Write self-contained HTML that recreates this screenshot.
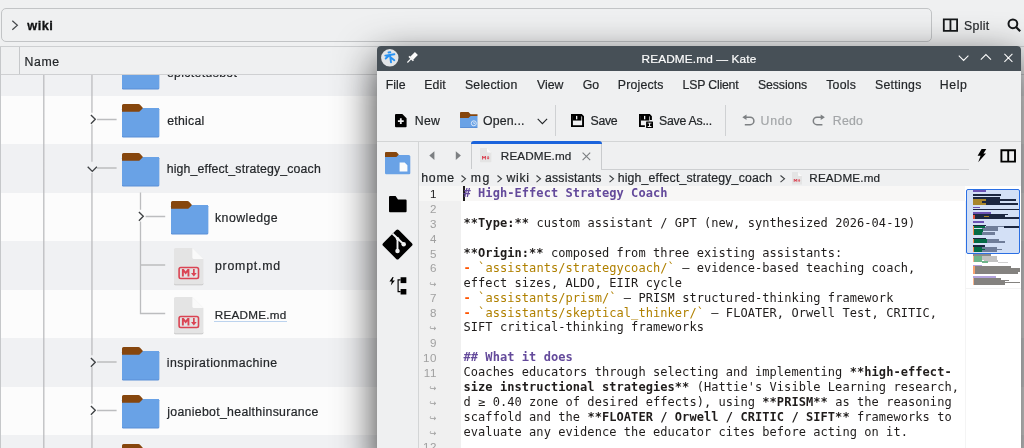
<!DOCTYPE html>
<html lang="en"><head><meta charset="utf-8"><title>Dolphin / Kate</title>
<style>
*{box-sizing:border-box;margin:0;padding:0}
html,body{width:1024px;height:448px;overflow:hidden;background:#eff0f1}
body{position:relative;font:12.3px "Liberation Sans", sans-serif;color:#232629}
.a{position:absolute}
.t{position:absolute;white-space:pre;line-height:16px;height:16px;-webkit-text-stroke:.2px}
svg{position:absolute;overflow:visible}
.row{position:absolute;left:1px;width:1023px}
.ln{position:absolute;background:#c3c4c6}
#kate{z-index:2;position:absolute;left:377px;top:45.5px;width:644px;height:420px;background:#eff0f1;border-radius:4px 4px 0 0;box-shadow:0 14px 40px rgba(0,0,0,.8)}
#kw{position:absolute;left:0;top:0;width:1024px;height:448px;will-change:transform}
#tx{will-change:transform}
.c{position:absolute;left:463.5px;white-space:pre;font:12px "DejaVu Sans Mono", "Liberation Mono", monospace;line-height:15px;height:15px;color:#1f1c1b;letter-spacing:.062px}
.c b{font-weight:bold}
.h{color:#644a9b;font-weight:bold}
.o{color:#ff5500;font-weight:bold}
.g{color:#b08000}
.n{position:absolute;left:419px;width:18.1px;letter-spacing:.6px;text-align:right;font:11.6px "Liberation Sans", sans-serif;line-height:16px;height:16px;color:#a0a0a0}
.m{position:absolute;height:1.5px}
.w{position:absolute;left:428.6px;width:9px;text-align:center;font:8.4px "DejaVu Sans",sans-serif;line-height:12px;height:12px;color:#9c9c9c}
</style></head>
<body>
<div class="a" style="left:1px;top:8px;width:931px;height:34px;border:1px solid #c2c4c6;border-radius:5px"></div>
<svg style="left:11px;top:20px" width="8" height="11" viewBox="0 0 8 11"><path d="M1.3 .7 L6.4 5.2 L1.3 9.7" fill="none" stroke="#46494c" stroke-width="1.2"/></svg>
<svg style="left:942px;top:18px" width="17" height="14" viewBox="0 0 17 14"><path d="M1.8 1.4H15.1V12.8H1.8Z M8.45 1.4V12.8" fill="none" stroke="#16181a" stroke-width="1.8"/></svg>
<svg style="left:1006px;top:18px" width="16" height="15" viewBox="0 0 16 15"><circle cx="6.9" cy="5.8" r="4.4" fill="none" stroke="#16181a" stroke-width="2"/><path d="M10 9 L14.2 13.2" stroke="#16181a" stroke-width="2.2"/></svg>
<div class="a" style="left:0;top:46px;width:1024px;height:1px;background:#cdcfd1"></div>
<div class="row" style="top:47.1px;height:48.5px;background:#f0f1f3"></div>
<div class="row" style="top:95.6px;height:48.5px;background:#fcfcfc"></div>
<div class="row" style="top:144.1px;height:48.5px;background:#f0f1f3"></div>
<div class="row" style="top:192.6px;height:48.5px;background:#fcfcfc"></div>
<div class="row" style="top:241.1px;height:48.5px;background:#f0f1f3"></div>
<div class="row" style="top:289.6px;height:48.5px;background:#fcfcfc"></div>
<div class="row" style="top:338.1px;height:48.5px;background:#f0f1f3"></div>
<div class="row" style="top:386.6px;height:48.5px;background:#fcfcfc"></div>
<div class="row" style="top:435.1px;height:48.5px;background:#f0f1f3"></div>
<div class="a" style="left:0;top:47px;width:1px;height:401px;background:#c6c8ca"></div>
<svg style="left:89.7px;top:114.20px" width="7" height="11" viewBox="0 0 7 11"><path d="M.9 .9 L5.3 5.3 L.9 9.7" fill="none" stroke="#3f4245" stroke-width="1.35"/></svg>
<svg style="left:89.7px;top:356.70px" width="7" height="11" viewBox="0 0 7 11"><path d="M.9 .9 L5.3 5.3 L.9 9.7" fill="none" stroke="#3f4245" stroke-width="1.35"/></svg>
<svg style="left:89.7px;top:405.20px" width="7" height="11" viewBox="0 0 7 11"><path d="M.9 .9 L5.3 5.3 L.9 9.7" fill="none" stroke="#3f4245" stroke-width="1.35"/></svg>
<svg style="left:86.8px;top:165.70px" width="11" height="7" viewBox="0 0 11 7"><path d="M.7 .8 L5.3 5.4 L9.9 .8" fill="none" stroke="#3f4245" stroke-width="1.35"/></svg>
<svg style="left:138.3px;top:211.20px" width="7" height="11" viewBox="0 0 7 11"><path d="M.9 .9 L5.3 5.3 L.9 9.7" fill="none" stroke="#3f4245" stroke-width="1.35"/></svg>
<svg style="left:0;top:0" width="400" height="448" viewBox="0 0 400 448"><path d="M43.80 75.0V448.0M91.95 75.0V112.8M91.95 124.4V161.8M91.95 173.0V355.3M91.95 366.9V403.8M91.95 415.4V448.0M97.0 119.50H116.6M97.0 362.00H116.6M97.0 410.50H116.6M97.0 168.00H116.6M140.50 192.6V209.8M140.50 221.4V314.2M145.6 216.50H165.2M140.5 265.00H165.2M140.5 313.50H165.2" fill="none" stroke="#bcbdbf" stroke-width="1.3"/></svg>
<svg style="left:122.00px;top:55.70px;z-index:0" width="37.2" height="33.6" viewBox="0 0 38 33.3" preserveAspectRatio="none"><path d="M0 5.2 Q0 3.9 1.3 3.9 H36.7 Q38 3.9 38 5.2 V32 Q38 33.3 36.7 33.3 H1.3 Q0 33.3 0 32 Z" fill="#5a8fd6"/><path d="M0 5.2 Q0 3.9 1.3 3.9 H36.7 Q38 3.9 38 5.2 V31 Q38 32.3 36.7 32.3 H1.3 Q0 32.3 0 31 Z" fill="#69a2e6"/><path d="M0 1.6 Q0 0 1.6 0 H16.8 Q17.6 0 18.2 .6 L21 3.4 Q21.5 3.9 21 4.4 L18.2 7.2 Q17.6 7.8 16.8 7.8 H0 Z" fill="#86460d"/></svg>
<svg style="left:122.00px;top:104.20px;z-index:1" width="37.2" height="33.6" viewBox="0 0 38 33.3" preserveAspectRatio="none"><path d="M0 5.2 Q0 3.9 1.3 3.9 H36.7 Q38 3.9 38 5.2 V32 Q38 33.3 36.7 33.3 H1.3 Q0 33.3 0 32 Z" fill="#5a8fd6"/><path d="M0 5.2 Q0 3.9 1.3 3.9 H36.7 Q38 3.9 38 5.2 V31 Q38 32.3 36.7 32.3 H1.3 Q0 32.3 0 31 Z" fill="#69a2e6"/><path d="M0 1.6 Q0 0 1.6 0 H16.8 Q17.6 0 18.2 .6 L21 3.4 Q21.5 3.9 21 4.4 L18.2 7.2 Q17.6 7.8 16.8 7.8 H0 Z" fill="#86460d"/></svg>
<svg style="left:122.00px;top:152.70px;z-index:1" width="37.2" height="33.6" viewBox="0 0 38 33.3" preserveAspectRatio="none"><path d="M0 5.2 Q0 3.9 1.3 3.9 H36.7 Q38 3.9 38 5.2 V32 Q38 33.3 36.7 33.3 H1.3 Q0 33.3 0 32 Z" fill="#5a8fd6"/><path d="M0 5.2 Q0 3.9 1.3 3.9 H36.7 Q38 3.9 38 5.2 V31 Q38 32.3 36.7 32.3 H1.3 Q0 32.3 0 31 Z" fill="#69a2e6"/><path d="M0 1.6 Q0 0 1.6 0 H16.8 Q17.6 0 18.2 .6 L21 3.4 Q21.5 3.9 21 4.4 L18.2 7.2 Q17.6 7.8 16.8 7.8 H0 Z" fill="#86460d"/></svg>
<svg style="left:170.70px;top:201.20px;z-index:1" width="37.2" height="33.6" viewBox="0 0 38 33.3" preserveAspectRatio="none"><path d="M0 5.2 Q0 3.9 1.3 3.9 H36.7 Q38 3.9 38 5.2 V32 Q38 33.3 36.7 33.3 H1.3 Q0 33.3 0 32 Z" fill="#5a8fd6"/><path d="M0 5.2 Q0 3.9 1.3 3.9 H36.7 Q38 3.9 38 5.2 V31 Q38 32.3 36.7 32.3 H1.3 Q0 32.3 0 31 Z" fill="#69a2e6"/><path d="M0 1.6 Q0 0 1.6 0 H16.8 Q17.6 0 18.2 .6 L21 3.4 Q21.5 3.9 21 4.4 L18.2 7.2 Q17.6 7.8 16.8 7.8 H0 Z" fill="#86460d"/></svg>
<svg style="left:122.00px;top:346.70px;z-index:1" width="37.2" height="33.6" viewBox="0 0 38 33.3" preserveAspectRatio="none"><path d="M0 5.2 Q0 3.9 1.3 3.9 H36.7 Q38 3.9 38 5.2 V32 Q38 33.3 36.7 33.3 H1.3 Q0 33.3 0 32 Z" fill="#5a8fd6"/><path d="M0 5.2 Q0 3.9 1.3 3.9 H36.7 Q38 3.9 38 5.2 V31 Q38 32.3 36.7 32.3 H1.3 Q0 32.3 0 31 Z" fill="#69a2e6"/><path d="M0 1.6 Q0 0 1.6 0 H16.8 Q17.6 0 18.2 .6 L21 3.4 Q21.5 3.9 21 4.4 L18.2 7.2 Q17.6 7.8 16.8 7.8 H0 Z" fill="#86460d"/></svg>
<svg style="left:122.00px;top:395.20px;z-index:1" width="37.2" height="33.6" viewBox="0 0 38 33.3" preserveAspectRatio="none"><path d="M0 5.2 Q0 3.9 1.3 3.9 H36.7 Q38 3.9 38 5.2 V32 Q38 33.3 36.7 33.3 H1.3 Q0 33.3 0 32 Z" fill="#5a8fd6"/><path d="M0 5.2 Q0 3.9 1.3 3.9 H36.7 Q38 3.9 38 5.2 V31 Q38 32.3 36.7 32.3 H1.3 Q0 32.3 0 31 Z" fill="#69a2e6"/><path d="M0 1.6 Q0 0 1.6 0 H16.8 Q17.6 0 18.2 .6 L21 3.4 Q21.5 3.9 21 4.4 L18.2 7.2 Q17.6 7.8 16.8 7.8 H0 Z" fill="#86460d"/></svg>
<svg style="left:122.00px;top:443.70px;z-index:1" width="37.2" height="33.6" viewBox="0 0 38 33.3" preserveAspectRatio="none"><path d="M0 5.2 Q0 3.9 1.3 3.9 H36.7 Q38 3.9 38 5.2 V32 Q38 33.3 36.7 33.3 H1.3 Q0 33.3 0 32 Z" fill="#5a8fd6"/><path d="M0 5.2 Q0 3.9 1.3 3.9 H36.7 Q38 3.9 38 5.2 V31 Q38 32.3 36.7 32.3 H1.3 Q0 32.3 0 31 Z" fill="#69a2e6"/><path d="M0 1.6 Q0 0 1.6 0 H16.8 Q17.6 0 18.2 .6 L21 3.4 Q21.5 3.9 21 4.4 L18.2 7.2 Q17.6 7.8 16.8 7.8 H0 Z" fill="#86460d"/></svg>
<svg style="left:174.30px;top:248.20px" width="30" height="38" viewBox="0 0 30 38"><path d="M1.6 0 H18.4 L29.4 11 V35.7 Q29.4 37.3 27.8 37.3 H1.6 Q0 37.3 0 35.7 V1.6 Q0 0 1.6 0Z" fill="#e4e4e4"/><path d="M0 34.7 V35.7 Q0 37.3 1.6 37.3 H27.8 Q29.4 37.3 29.4 35.7 V34.7 Q29.4 36.3 27.8 36.3 H1.6 Q0 36.3 0 34.7Z" fill="#cbcbcb"/><path d="M18.4 0 L29.4 11 H20 Q18.4 11 18.4 9.4 Z" fill="#fafafa"/><rect x="5.1" y="19.5" width="19.4" height="11" rx="1.7" fill="none" stroke="#da4453" stroke-width="1.6"/><path d="M7.9 28.6 V21.1 H9.8 L11.65 23.6 L13.5 21.1 H15.4 V28.6 H13.5 V24.2 L11.65 26.6 L9.8 24.2 V28.6Z M19 21.1 H20.7 V25 H22.7 L19.85 28.6 L17 25 H19Z" fill="#da4453"/></svg>
<svg style="left:174.30px;top:296.70px" width="30" height="38" viewBox="0 0 30 38"><path d="M1.6 0 H18.4 L29.4 11 V35.7 Q29.4 37.3 27.8 37.3 H1.6 Q0 37.3 0 35.7 V1.6 Q0 0 1.6 0Z" fill="#e4e4e4"/><path d="M0 34.7 V35.7 Q0 37.3 1.6 37.3 H27.8 Q29.4 37.3 29.4 35.7 V34.7 Q29.4 36.3 27.8 36.3 H1.6 Q0 36.3 0 34.7Z" fill="#cbcbcb"/><path d="M18.4 0 L29.4 11 H20 Q18.4 11 18.4 9.4 Z" fill="#fafafa"/><rect x="5.1" y="19.5" width="19.4" height="11" rx="1.7" fill="none" stroke="#da4453" stroke-width="1.6"/><path d="M7.9 28.6 V21.1 H9.8 L11.65 23.6 L13.5 21.1 H15.4 V28.6 H13.5 V24.2 L11.65 26.6 L9.8 24.2 V28.6Z M19 21.1 H20.7 V25 H22.7 L19.85 28.6 L17 25 H19Z" fill="#da4453"/></svg>
<div class="a" style="left:214px;top:320.8px;width:73px;height:1px;background:#bcd3ee;z-index:1"></div>
<div class="a" style="left:1px;top:47px;width:1023px;height:28px;background:#eff0f1;border-bottom:1px solid #cfd0d2;z-index:1"></div>
<div class="a" style="left:19px;top:47px;width:1px;height:27px;background:#c6c8ca;z-index:1"></div>
<div id="kate"></div><div id="kw" style="z-index:3">
<div class="a" style="left:377px;top:45.5px;width:644px;height:25px;background:#475057;border-radius:4px 4px 0 0"></div>
<svg style="left:381px;top:48.5px" width="18" height="18" viewBox="381 48.5 18 18"><circle cx="389.8" cy="57.3" r="8.7" fill="#e3e5e7"/><path d="M385.3 55.1 L394.4 53.7 M389.7 54.5 L385.7 58 M390 54.4 L391 61.8 M390.5 56.7 L394.3 59.7 M388.5 52 L390.3 51.8" fill="none" stroke="#2892f3" stroke-width="1.9" stroke-linecap="round"/></svg>
<svg style="left:406px;top:51px" width="13" height="13" viewBox="406 51 13 13"><path d="M416.4 53.5 L411.7 58.2" stroke="#fcfcfc" stroke-width="4.2"/><path d="M409 56.4 L413.4 60.8" stroke="#fcfcfc" stroke-width="1.5"/><path d="M411.2 58.7 L407.4 62.5" stroke="#fcfcfc" stroke-width="1.1"/></svg>
<svg style="left:958px;top:53px" width="56" height="10" viewBox="0 0 56 10"><path d="M.8 2.6 L5.6 7.4 L10.4 2.6 M22.8 6.6 L27.9 1.6 L33 6.6 M46.4 .9 L54.4 8.9 M54.4 .9 L46.4 8.9" fill="none" stroke="#fcfcfc" stroke-width="1.05"/></svg>
<div class="a" style="left:377px;top:141px;width:644px;height:1px;background:#d3d5d6"></div>
<div class="a" style="left:555px;top:104.5px;width:1px;height:31px;background:#cfd1d3"></div>
<div class="a" style="left:725px;top:104.5px;width:1px;height:31px;background:#cfd1d3"></div>
<svg style="left:395.2px;top:113.5px" width="12" height="14" viewBox="0 0 12 14"><path d="M1 0 H7.3 L11.6 4.3 V12.2 Q11.6 13.2 10.6 13.2 H1 Q0 13.2 0 12.2 V1 Q0 0 1 0Z" fill="#000"/><path d="M2.9 6.2 H4.9 V4.2 H6.7 V6.2 H8.7 V8 H6.7 V10 H4.9 V8 H2.9Z" fill="#eff0f1"/></svg>
<svg style="left:460.4px;top:111.9px" width="18" height="16" viewBox="0 0 18 16"><path d="M0 4 H17.5 V15.1 Q17.5 16 16.6 16 H.9 Q0 16 0 15.1Z" fill="#69a2e6"/><path d="M0 15 V15.1 Q0 16 .9 16 H16.6 Q17.5 16 17.5 15.1 V15Z" fill="#5a8fd6"/><path d="M0 .9 Q0 0 .9 0 H8.5 L10.6 2.2 H17.5 V4.1 H10.6 L8.5 6 H0Z" fill="#86460d"/><circle cx="13.8" cy="11.3" r="2.5" fill="none" stroke="#e4edf9" stroke-width=".9"/><path d="M13.8 9.9 V11.4 H15" fill="none" stroke="#e4edf9" stroke-width=".8"/></svg>
<svg style="left:536.5px;top:117.5px" width="11" height="7" viewBox="0 0 11 7"><path d="M.7 .9 L5.4 5.6 L10.1 .9" fill="none" stroke="#232629" stroke-width="1.1"/></svg>
<svg style="left:570.9px;top:113.5px" width="14" height="14" viewBox="0 0 14 14"><path d="M.95 .95 H10.4 L12.05 2.6 V12.15 H.95Z" fill="#f1f2f3" stroke="#000" stroke-width="1.9"/><rect x="1.9" y=".95" width="8.4" height="5.6" fill="#000"/><rect x="5" y="1.9" width="1.3" height="3.4" fill="#eff0f1"/></svg>
<svg style="left:638.9px;top:113.5px" width="15" height="15" viewBox="0 0 15 15"><path d="M11.95 5.9 V2.6 L10.4 .95 H.95 V12.15 H5.9" fill="none" stroke="#000" stroke-width="1.9"/><rect x="1.9" y=".95" width="8.4" height="5.6" fill="#000"/><rect x="5" y="1.9" width="1.3" height="3.4" fill="#eff0f1"/><rect x="7.1" y="7.5" width="6.9" height="6.6" rx=".6" fill="#000"/><path d="M8.7 8.7 H12.4 V9.6 H11.1 V12.1 H12.4 V13 H8.7 V12.1 H10 V9.6 H8.7Z" fill="#eff0f1"/></svg>
<svg style="left:741.5px;top:114px" width="13" height="12" viewBox="0 0 13 12"><path d="M4 3.25 H8.2 A3.7 3.7 0 0 1 8.2 10.65 H2.8" fill="none" stroke="#7d8083" stroke-width="1.5"/><path d="M4.5 .4 L.3 3.3 L4.5 6.1Z" fill="#7d8083"/></svg>
<svg style="left:813px;top:114px" width="13" height="12" viewBox="0 0 13 12"><path d="M8.2 3.25 H4 A3.7 3.7 0 0 0 4 10.65 H9.4" fill="none" stroke="#7d8083" stroke-width="1.5"/><path d="M7.7 .4 L11.9 3.3 L7.7 6.1Z" fill="#7d8083"/></svg>
<div class="a" style="left:418px;top:142px;width:1px;height:306px;background:#d3d5d6"></div>
<svg style="left:384.5px;top:151.6px" width="26" height="23" viewBox="0 0 26 23"><path d="M0 3 H23.7 Q25.3 3 25.3 4.6 V21 Q25.3 22.2 24.1 22.2 H1.2 Q0 22.2 0 21Z" fill="#69a2e6"/><path d="M0 1 Q0 0 1 0 H11.4 L13.8 2.4 L11.4 4.9 H0Z" fill="#86460d"/><path d="M14.6 10.4 H19.6 L22.4 13.2 V19.6 H14.6Z" fill="#fcfcfc"/></svg>
<svg style="left:388.8px;top:196.3px" width="18" height="17" viewBox="0 0 18 17"><path d="M0 1 Q0 0 1 0 H6.6 L9 3.6 H16.6 Q17.6 3.6 17.6 4.6 V15.2 Q17.6 16.2 16.6 16.2 H1 Q0 16.2 0 15.2Z" fill="#000"/></svg>
<svg style="left:381.7px;top:229.25px" width="31" height="31" viewBox="0 0 31 31"><rect x="4.4" y="4.4" width="22.2" height="22.2" rx="1.8" transform="rotate(45 15.5 15.5)" fill="#000"/><path d="M10.6 4.8 L21.4 15 M15.5 9.4 V21.5" stroke="#eff0f1" stroke-width="1.9" fill="none"/><circle cx="21.7" cy="15.2" r="2.25" fill="#eff0f1"/><circle cx="15.5" cy="9.6" r="1.7" fill="#eff0f1"/><circle cx="15.5" cy="21.9" r="2.25" fill="#eff0f1"/></svg>
<svg style="left:388.5px;top:277px" width="18" height="18" viewBox="0 0 18 18"><path d="M3.6 0 L.4 4.5 H2.8 L1.8 8.4 L5.9 3.4 H3.4 L4.6 0Z" fill="#000"/><rect x="11.6" y=".25" width="5.75" height="5.85" fill="#000"/><rect x="11.6" y="12" width="5.75" height="5.5" fill="#000"/><path d="M11.6 2.9 H9.1 V14.6 H11.6" fill="none" stroke="#000" stroke-width="1.15"/></svg>
<svg style="left:429px;top:151px" width="32" height="10" viewBox="0 0 32 10"><path d="M5.4 .3 V8.9 L.3 4.6Z M26.8 .3 V8.9 L31.9 4.6Z" fill="#7c7f82"/></svg>
<div class="a" style="left:601px;top:168.5px;width:368px;height:1px;background:#cdcfd1"></div>
<div class="a" style="left:471px;top:141px;width:131px;height:28px;border:1px solid #c9cbcd;border-bottom:none;border-radius:3px 3px 0 0;background:#eff0f1"></div>
<div class="a" style="left:471px;top:141px;width:131px;height:3.4px;border-radius:3px 3px 0 0;background:#1a63dc"></div>
<svg style="left:480.0px;top:148.0px" width="11.4" height="14.2" viewBox="0 0 11.4 14.2"><path d="M.6 0 H7 L11.4 4.4 V13.6 Q11.4 14.2 10.8 14.2 H.6 Q0 14.2 0 13.6 V.6 Q0 0 .6 0Z" fill="#e4e4e4"/><path d="M7 0 L11.4 4.4 H7.6 Q7 4.4 7 3.8Z" fill="#fafafa"/><path d="M2 11.4 V8 H3 L4 9.2 L5 8 H6 V11.4 H5.1 V9.5 L4 10.7 L2.9 9.5 V11.4Z M7.6 8 H8.6 V9.7 H9.6 L8.1 11.5 L6.6 9.7 H7.6Z" fill="#da4453"/></svg>
<svg style="left:792.0px;top:172.1px" width="10.0" height="12.5" viewBox="0 0 11.4 14.2"><path d="M.6 0 H7 L11.4 4.4 V13.6 Q11.4 14.2 10.8 14.2 H.6 Q0 14.2 0 13.6 V.6 Q0 0 .6 0Z" fill="#e4e4e4"/><path d="M7 0 L11.4 4.4 H7.6 Q7 4.4 7 3.8Z" fill="#fafafa"/><path d="M2 11.4 V8 H3 L4 9.2 L5 8 H6 V11.4 H5.1 V9.5 L4 10.7 L2.9 9.5 V11.4Z M7.6 8 H8.6 V9.7 H9.6 L8.1 11.5 L6.6 9.7 H7.6Z" fill="#da4453"/></svg>
<svg style="left:582px;top:151.5px" width="9" height="9" viewBox="0 0 9 9"><path d="M.6 .6 L8.2 8.2 M8.2 .6 L.6 8.2" stroke="#7a7d80" stroke-width="1.1"/></svg>
<svg style="left:977px;top:148.5px" width="10" height="14" viewBox="0 0 10 14"><path d="M4.6 0 H9.3 L6.4 4.6 H9 L1.2 13.2 L3.6 6.8 H.6Z" fill="#000"/></svg>
<svg style="left:1000px;top:148.5px" width="17" height="14" viewBox="0 0 17 14"><path d="M1.4 1.3 H15 V12.6 H1.4Z M8.2 1.3 V12.6" fill="none" stroke="#000" stroke-width="1.9"/></svg>
<svg style="left:461.1px;top:174.8px" width="6" height="8" viewBox="0 0 6 8"><path d="M.5 .5 L4.5 3.8 L.5 7.1" fill="none" stroke="#3c3f42" stroke-width="1.1"/></svg>
<svg style="left:496.6px;top:174.8px" width="6" height="8" viewBox="0 0 6 8"><path d="M.5 .5 L4.5 3.8 L.5 7.1" fill="none" stroke="#3c3f42" stroke-width="1.1"/></svg>
<svg style="left:535.9px;top:174.8px" width="6" height="8" viewBox="0 0 6 8"><path d="M.5 .5 L4.5 3.8 L.5 7.1" fill="none" stroke="#3c3f42" stroke-width="1.1"/></svg>
<svg style="left:609.1px;top:174.8px" width="6" height="8" viewBox="0 0 6 8"><path d="M.5 .5 L4.5 3.8 L.5 7.1" fill="none" stroke="#3c3f42" stroke-width="1.1"/></svg>
<svg style="left:780.1px;top:174.8px" width="6" height="8" viewBox="0 0 6 8"><path d="M.5 .5 L4.5 3.8 L.5 7.1" fill="none" stroke="#3c3f42" stroke-width="1.1"/></svg>
<div class="a" style="left:419px;top:186px;width:547px;height:262px;background:#fff"></div>
<div class="a" style="left:966px;top:186px;width:55px;height:262px;background:#fff"></div>
<div class="a" style="left:419px;top:186px;width:42px;height:262px;background:#f0f0f0"></div>
<div class="a" style="left:965px;top:201px;width:1px;height:247px;background:#f4f4f4"></div>
<div class="a" style="left:461px;top:186px;width:504px;height:15px;background:#f8f7f6"></div>
<div class="a" style="left:419px;top:186px;width:42px;height:15px;background:#f6f6f5"></div>
<div class="a" style="left:463.3px;top:186.2px;width:2px;height:14.7px;background:#1f1c1b"></div>
<div class="c" style="top:185.50px"><span class="h"># High-Effect Strategy Coach</span></div>
<div class="n" style="top:186.00px;color:#1e1e1e">1</div>
<div class="n" style="top:201.00px">2</div>
<div class="c" style="top:215.50px"><b>**Type:**</b> custom assistant / GPT (new, synthesized 2026-04-19)</div>
<div class="n" style="top:216.00px">3</div>
<div class="n" style="top:231.00px">4</div>
<div class="c" style="top:245.50px"><b>**Origin:**</b> composed from three existing assistants:</div>
<div class="n" style="top:246.00px">5</div>
<div class="c" style="top:260.50px"><span class="o">-</span> <span class="g">`assistants/strategycoach/`</span> — evidence-based teaching coach,</div>
<div class="n" style="top:260.00px">6</div>
<div class="c" style="top:275.50px">effect sizes, ALDO, EIIR cycle</div>
<div class="w" style="top:277.60px">↪</div>
<div class="c" style="top:290.50px"><span class="o">-</span> <span class="g">`assistants/prism/`</span> — PRISM structured-thinking framework</div>
<div class="n" style="top:290.00px">7</div>
<div class="c" style="top:305.50px"><span class="o">-</span> <span class="g">`assistants/skeptical_thinker/`</span> — FLOATER, Orwell Test, CRITIC,</div>
<div class="n" style="top:305.00px">8</div>
<div class="c" style="top:319.50px">SIFT critical-thinking frameworks</div>
<div class="w" style="top:321.60px">↪</div>
<div class="n" style="top:335.00px">9</div>
<div class="c" style="top:349.50px"><span class="h">## What it does</span></div>
<div class="n" style="top:350.00px">10</div>
<div class="c" style="top:364.50px">Coaches educators through selecting and implementing <b>**high-effect-</b></div>
<div class="n" style="top:365.00px">11</div>
<div class="c" style="top:379.50px"><b>size instructional strategies**</b> (Hattie's Visible Learning research,</div>
<div class="w" style="top:381.60px">↪</div>
<div class="c" style="top:394.50px">d ≥ 0.40 zone of desired effects), using <b>**PRISM**</b> as the reasoning</div>
<div class="w" style="top:396.60px">↪</div>
<div class="c" style="top:409.50px">scaffold and the <b>**FLOATER / Orwell / CRITIC / SIFT**</b> frameworks to</div>
<div class="w" style="top:411.60px">↪</div>
<div class="c" style="top:424.50px">evaluate any evidence the educator cites before acting on it.</div>
<div class="w" style="top:426.60px">↪</div>
<div class="n" style="top:439.00px">12</div>
<div class="a" style="left:966px;top:189px;width:54.4px;height:64.6px;background:#d3e0f6;border:1px solid #2b6fe3;border-radius:2px"></div>
<div class="m" style="left:972.8px;top:190.2px;width:12.8px;height:1.5px;background:#6a52b3"></div>
<div class="m" style="left:972.8px;top:194.0px;width:28.7px;height:1.6px;background:#1c2740"></div>
<div class="m" style="left:972.8px;top:197.4px;width:27.2px;height:7.3px;background:#1c2740"></div>
<div class="m" style="left:972.8px;top:197.4px;width:23.7px;height:1.6px;background:#1c2740"></div>
<div class="m" style="left:1000.0px;top:199.2px;width:15.5px;height:1.7px;background:#1c2740"></div>
<div class="m" style="left:988.0px;top:203.3px;width:30.0px;height:1.4px;background:#1c2740"></div>
<div class="m" style="left:972.8px;top:199.0px;width:12.8px;height:5.7px;background:#a8862b"></div>
<div class="m" style="left:982.0px;top:201.0px;width:5.5px;height:2.2px;background:#1c2740"></div>
<div class="m" style="left:972.8px;top:206.9px;width:7.2px;height:1.3px;background:#6a52b3"></div>
<div class="m" style="left:972.8px;top:208.7px;width:46.6px;height:1.6px;background:#1c2740"></div>
<div class="m" style="left:972.8px;top:212.3px;width:18.2px;height:1.6px;background:#6a52b3"></div>
<div class="m" style="left:972.8px;top:214.0px;width:35.2px;height:1.2px;background:#1c2740"></div>
<div class="m" style="left:972.8px;top:215.0px;width:32.2px;height:3.8px;background:#1c2740"></div>
<div class="m" style="left:1005.0px;top:217.3px;width:14.4px;height:1.5px;background:#1c2740"></div>
<div class="m" style="left:972.8px;top:214.6px;width:1.8px;height:4.2px;background:#e0503c"></div>
<div class="m" style="left:984.0px;top:215.6px;width:5.0px;height:1.2px;background:#a8862b"></div>
<div class="m" style="left:972.8px;top:221.0px;width:11.2px;height:1.6px;background:#6a52b3"></div>
<div class="m" style="left:972.8px;top:224.5px;width:13.7px;height:1.6px;background:#1c2740"></div>
<div class="m" style="left:1003.5px;top:226.1px;width:15.9px;height:1.8px;background:#1c2740"></div>
<div class="m" style="left:986.0px;top:226.3px;width:17.5px;height:1.1px;background:#6f7d99"></div>
<div class="m" style="left:982.0px;top:227.4px;width:15.5px;height:4.1px;background:#6f7d99"></div>
<div class="m" style="left:981.5px;top:231.5px;width:13.2px;height:3.9px;background:#6f7d99"></div>
<div class="m" style="left:973.6px;top:226.1px;width:11.4px;height:2.4px;background:#046b45"></div>
<div class="m" style="left:973.6px;top:228.5px;width:9.4px;height:3.0px;background:#046b45"></div>
<div class="m" style="left:973.6px;top:231.5px;width:8.4px;height:3.9px;background:#046b45"></div>
<div class="m" style="left:972.8px;top:226.1px;width:0.9px;height:9.3px;background:#f08a4b"></div>
<div class="m" style="left:972.8px;top:237.6px;width:12.8px;height:1.5px;background:#1c2740"></div>
<div class="m" style="left:986.0px;top:239.3px;width:13.4px;height:2.1px;background:#6f7d99"></div>
<div class="m" style="left:986.0px;top:241.4px;width:19.0px;height:1.2px;background:#6f7d99"></div>
<div class="m" style="left:973.6px;top:239.1px;width:13.3px;height:3.5px;background:#046b45"></div>
<div class="m" style="left:972.8px;top:239.1px;width:0.9px;height:3.5px;background:#f08a4b"></div>
<div class="m" style="left:972.8px;top:245.1px;width:11.9px;height:1.5px;background:#1c2740"></div>
<div class="m" style="left:982.0px;top:247.0px;width:15.0px;height:5.0px;background:#6f7d99"></div>
<div class="m" style="left:997.0px;top:249.0px;width:4.5px;height:1.0px;background:#6f7d99"></div>
<div class="m" style="left:973.6px;top:246.6px;width:8.4px;height:5.4px;background:#046b45"></div>
<div class="m" style="left:982.0px;top:248.6px;width:3.0px;height:1.4px;background:#046b45"></div>
<div class="m" style="left:972.8px;top:246.6px;width:0.9px;height:5.4px;background:#f08a4b"></div>
<div class="m" style="left:972.8px;top:254.4px;width:18.2px;height:1.5px;background:#8c8c8c"></div>
<div class="m" style="left:982.0px;top:256.2px;width:15.0px;height:3.8px;background:#c2c2c2"></div>
<div class="m" style="left:980.0px;top:258.0px;width:12.0px;height:2.4px;background:#c2c2c2"></div>
<div class="m" style="left:984.0px;top:260.0px;width:14.0px;height:2.4px;background:#c2c2c2"></div>
<div class="m" style="left:998.0px;top:261.6px;width:10.0px;height:1.0px;background:#d0d0d0"></div>
<div class="m" style="left:973.6px;top:256.0px;width:8.4px;height:6.4px;background:#6fb58b"></div>
<div class="m" style="left:982.0px;top:261.0px;width:6.0px;height:1.6px;background:#6fb58b"></div>
<div class="m" style="left:972.8px;top:256.0px;width:0.9px;height:6.4px;background:#f7b48c"></div>
<div class="m" style="left:972.8px;top:264.6px;width:9.2px;height:1.5px;background:#b3a3dc"></div>
<div class="m" style="left:974.5px;top:266.2px;width:36.1px;height:7.5px;background:#84827f"></div>
<div class="m" style="left:1010.6px;top:268.0px;width:9.4px;height:3.6px;background:#84827f"></div>
<div class="m" style="left:1010.6px;top:271.6px;width:7.4px;height:2.1px;background:#84827f"></div>
<div class="m" style="left:972.8px;top:266.2px;width:1.8px;height:7.5px;background:#f7a06e"></div>
<div class="m" style="left:972.8px;top:275.9px;width:23.2px;height:1.9px;background:#b3a3dc"></div>
<div class="m" style="left:973.6px;top:277.8px;width:27.0px;height:6.8px;background:#84827f"></div>
<div class="m" style="left:1000.6px;top:279.5px;width:8.2px;height:1.9px;background:#84827f"></div>
<div class="m" style="left:1000.6px;top:281.4px;width:4.4px;height:3.2px;background:#84827f"></div>
<div class="m" style="left:1005.0px;top:281.5px;width:15.0px;height:1.3px;background:#84827f"></div>
<div class="m" style="left:972.8px;top:277.8px;width:0.9px;height:6.8px;background:#f7b48c"></div>
<div class="m" style="left:966.0px;top:288.0px;width:55.0px;height:1.0px;background:#f3f3f3"></div>
</div>
<div id="tx" style="position:absolute;left:0;top:0;z-index:4"><span class="t" style="left:27.29px;top:18px;letter-spacing:0.421px;font-weight:bold;font-size:12.8px;color:#101112;-webkit-text-stroke:.3px;">wiki</span>
<span class="t" style="left:24.55px;top:54px;letter-spacing:0.572px;">Name</span>
<span class="t" style="left:963.93px;top:18px;letter-spacing:0.349px;">Split</span>
<span class="t" style="left:166.96px;top:65px;letter-spacing:0.331px;clip-path:inset(10.00px 0 0 0);">epictetusbot</span>
<span class="t" style="left:167.16px;top:113px;letter-spacing:0.275px;">ethical</span>
<span class="t" style="left:166.67px;top:161px;letter-spacing:0.157px;">high_effect_strategy_coach</span>
<span class="t" style="left:214.93px;top:210px;letter-spacing:0.497px;">knowledge</span>
<span class="t" style="left:214.93px;top:258px;letter-spacing:0.797px;">prompt.md</span>
<span class="t" style="left:214.86px;top:307px;letter-spacing:0.225px;font-size:11.7px;">README.md</span>
<span class="t" style="left:166.80px;top:355px;letter-spacing:0.462px;">inspirationmachine</span>
<span class="t" style="left:167.30px;top:404px;letter-spacing:0.306px;">joaniebot_healthinsurance</span>
<span class="t" style="left:641.50px;top:51px;letter-spacing:0.133px;font-size:11.8px;color:#fcfcfc;">README.md — Kate</span>
<span class="t" style="left:385.82px;top:77px;letter-spacing:-0.006px;">File</span>
<span class="t" style="left:424.30px;top:77px;letter-spacing:0.071px;">Edit</span>
<span class="t" style="left:464.93px;top:77px;letter-spacing:0.218px;">Selection</span>
<span class="t" style="left:537.10px;top:77px;letter-spacing:-0.069px;">View</span>
<span class="t" style="left:582.85px;top:77px;letter-spacing:-0.062px;">Go</span>
<span class="t" style="left:617.80px;top:77px;letter-spacing:0.178px;">Projects</span>
<span class="t" style="left:682.55px;top:77px;letter-spacing:-0.193px;">LSP Client</span>
<span class="t" style="left:757.93px;top:77px;letter-spacing:-0.092px;">Sessions</span>
<span class="t" style="left:826.26px;top:77px;letter-spacing:0.220px;">Tools</span>
<span class="t" style="left:874.93px;top:77px;letter-spacing:0.285px;">Settings</span>
<span class="t" style="left:939.80px;top:77px;letter-spacing:0.605px;">Help</span>
<span class="t" style="left:414.80px;top:113px;letter-spacing:0.223px;">New</span>
<span class="t" style="left:482.95px;top:113px;letter-spacing:0.203px;">Open...</span>
<span class="t" style="left:590.55px;top:113px;letter-spacing:-0.300px;">Save</span>
<span class="t" style="left:658.93px;top:113px;letter-spacing:-0.229px;">Save As...</span>
<span class="t" style="left:760.55px;top:113px;letter-spacing:0.746px;color:#a3a6a8;">Undo</span>
<span class="t" style="left:832.80px;top:113px;letter-spacing:0.223px;color:#a3a6a8;">Redo</span>
<span class="t" style="left:500.86px;top:148px;letter-spacing:0.123px;font-size:11.7px;">README.md</span>
<span class="t" style="left:421.30px;top:170px;letter-spacing:0.712px;">home</span>
<span class="t" style="left:470.71px;top:170px;letter-spacing:1.534px;">mg</span>
<span class="t" style="left:506.47px;top:170px;letter-spacing:0.710px;">wiki</span>
<span class="t" style="left:544.99px;top:170px;letter-spacing:0.200px;">assistants</span>
<span class="t" style="left:617.67px;top:170px;letter-spacing:0.172px;">high_effect_strategy_coach</span>
<span class="t" style="left:809.30px;top:170px;letter-spacing:0.162px;font-size:11.7px;">README.md</span></div>
</body></html>
